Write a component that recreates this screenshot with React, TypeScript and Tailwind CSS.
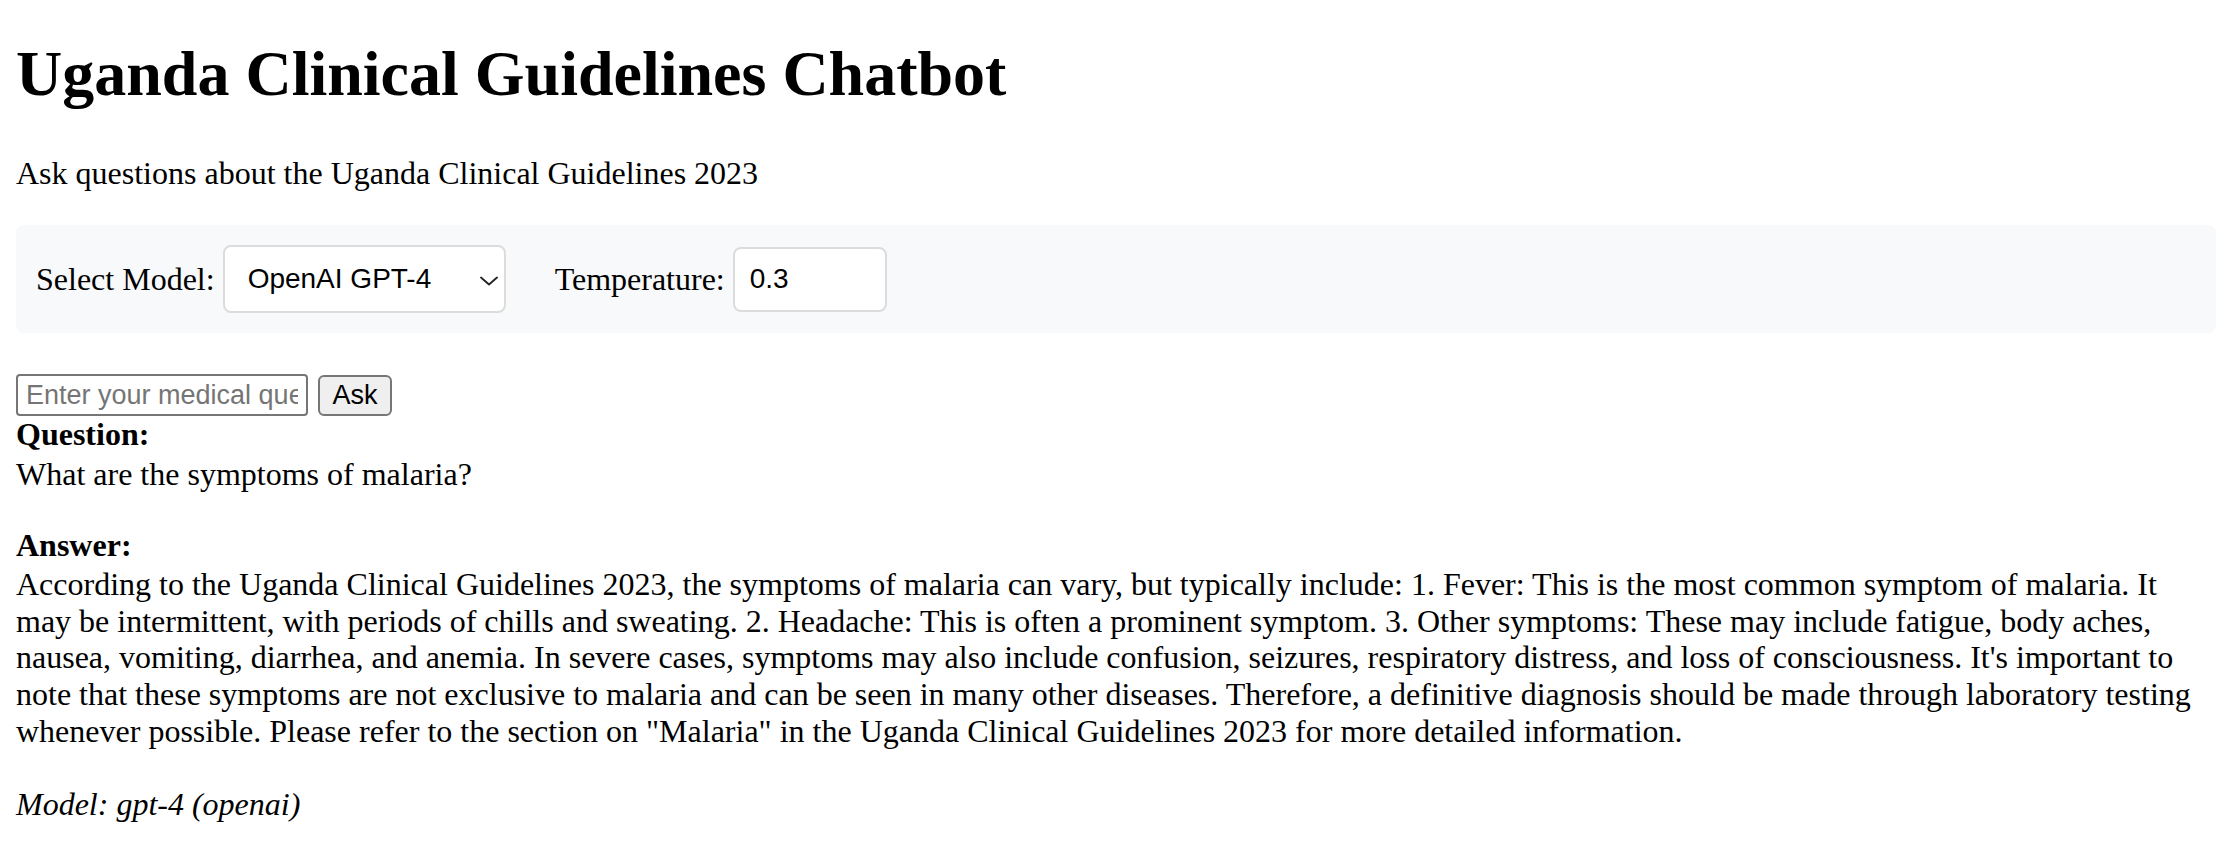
import React from "react";

export default function App() {
  return (
    <div className="min-h-[858px] bg-white px-[16px] text-black font-['Liberation_Serif','Times_New_Roman',serif] text-[32px] leading-[36px]">
      <h1 className="pt-[38px] text-[64px] leading-[72px] font-bold">
        Uganda Clinical Guidelines Chatbot
      </h1>
      <p className="mt-[45px]">Ask questions about the Uganda Clinical Guidelines 2023</p>

      <div className="mt-[34px] flex w-[2200px] items-center rounded-[8px] bg-[#f8f9fa] p-[20px]">
        <label className="flex items-center">
          <span>Select Model:</span>
          <div className="relative ml-[8px]">
            <select
              defaultValue="openai-gpt-4"
              className="h-[68px] w-[283px] appearance-none rounded-[8px] border-2 border-[#dcdcdc] bg-white pl-[23px] pr-[40px] font-['Liberation_Sans',Arial,sans-serif] text-[28px] text-black outline-none"
            >
              <option value="openai-gpt-4">OpenAI GPT-4</option>
              <option value="openai-gpt-35">OpenAI GPT-3.5</option>
            </select>
            <svg
              className="pointer-events-none absolute right-[8px] top-[31px]"
              width="18"
              height="10"
              viewBox="0 0 18 10"
              fill="none"
            >
              <path d="M1 1.5 L9 8.5 L17 1.5" stroke="#222" strokeWidth="1.8" strokeLinecap="round" strokeLinejoin="round" />
            </svg>
          </div>
        </label>
        <label className="ml-[49px] flex items-center">
          <span>Temperature:</span>
          <input
            type="text"
            defaultValue="0.3"
            className="ml-[8px] h-[65px] w-[154px] rounded-[8px] border-2 border-[#dcdcdc] bg-white pl-[15px] font-['Liberation_Sans',Arial,sans-serif] text-[28px] text-black outline-none"
          />
        </label>
      </div>

      <div className="mt-[41px] flex items-center gap-[10px]">
        <input
          type="text"
          placeholder="Enter your medical question"
          className="h-[42px] w-[292px] rounded-[4px] border-2 border-[#767676] bg-white px-[8px] font-['Liberation_Sans',Arial,sans-serif] text-[27px] text-black placeholder:text-[#757575] outline-none"
        />
        <button
          type="button"
          className="h-[41px] w-[74px] rounded-[6px] border-2 border-[#767676] bg-[#efefef] font-['Liberation_Sans',Arial,sans-serif] text-[27px] leading-none text-black"
        >
          Ask
        </button>
      </div>

      <div>
        <div className="font-bold">Question:</div>
        <div className="mt-[4px]">What are the symptoms of malaria?</div>
        <div className="mt-[35px] font-bold">Answer:</div>
        <div className="mt-[3px] leading-[36.7px]">
          According to the Uganda Clinical Guidelines 2023, the symptoms of malaria can vary, but typically include: 1. Fever: This is the most common symptom of malaria. It may be intermittent, with periods of chills and sweating. 2. Headache: This is often a prominent symptom. 3. Other symptoms: These may include fatigue, body aches, nausea, vomiting, diarrhea, and anemia. In severe cases, symptoms may also include confusion, seizures, respiratory distress, and loss of consciousness. It's important to note that these symptoms are not exclusive to malaria and can be seen in many other diseases. Therefore, a definitive diagnosis should be made through laboratory testing whenever possible. Please refer to the section on "Malaria" in the Uganda Clinical Guidelines 2023 for more detailed information.
        </div>
        <div className="mt-[36px] italic">Model: gpt-4 (openai)</div>
      </div>
    </div>
  );
}
